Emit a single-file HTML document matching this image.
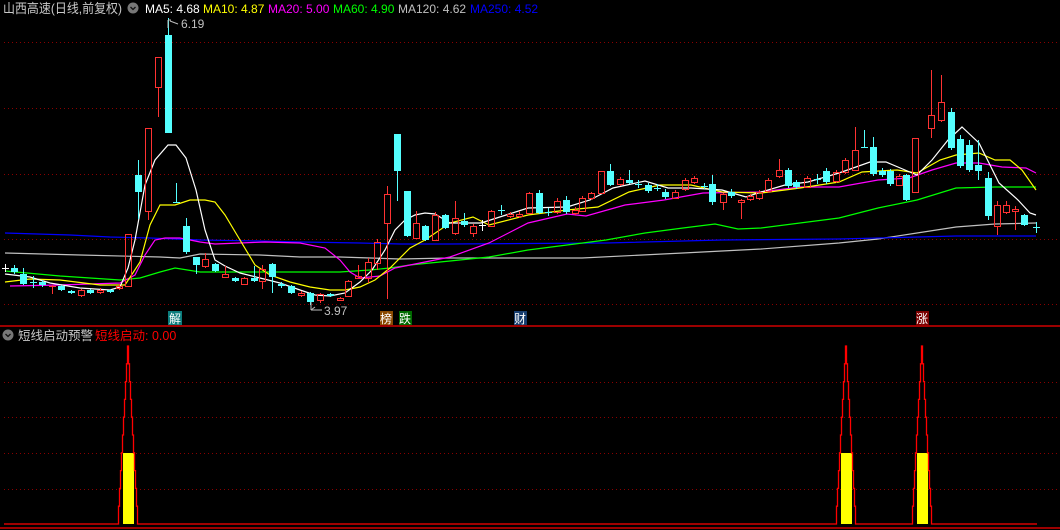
<!DOCTYPE html>
<html><head><meta charset="utf-8"><style>
html,body{margin:0;padding:0;background:#000;width:1060px;height:530px;overflow:hidden}
svg{display:block}
text{font-family:"Liberation Sans","Noto Sans CJK SC",sans-serif}
</style></head><body>
<svg id="s" width="1060" height="530" xmlns="http://www.w3.org/2000/svg">
<rect width="1060" height="530" fill="#000"/>
<g stroke="#8a0000" stroke-width="1" stroke-dasharray="1,3">
<line x1="4" y1="42.5" x2="1060" y2="42.5"/>
<line x1="4" y1="108.5" x2="1060" y2="108.5"/>
<line x1="4" y1="174.5" x2="1060" y2="174.5"/>
<line x1="4" y1="239.5" x2="1060" y2="239.5"/>
<line x1="4" y1="304.5" x2="1060" y2="304.5"/>
<line x1="4" y1="382.5" x2="1060" y2="382.5"/>
<line x1="4" y1="417.5" x2="1060" y2="417.5"/>
<line x1="4" y1="453.5" x2="1060" y2="453.5"/>
<line x1="4" y1="489.5" x2="1060" y2="489.5"/>
</g>
<line x1="0" y1="326" x2="1060" y2="326" stroke="#d00000" stroke-width="1.5"/>
<line x1="0" y1="528" x2="1060" y2="528" stroke="#d00000" stroke-width="1.5"/>
<g id="ma" fill="none" stroke-width="1.2"></g>
<g id="cd"></g>
<g id="ind"></g>
<!-- header -->
<text x="3" y="13" font-size="13" fill="#c8c8c8" textLength="119" lengthAdjust="spacingAndGlyphs">山西高速(日线,前复权)</text>
<circle cx="133" cy="8" r="5.5" fill="#777"/>
<path d="M130.5 7 L133 9.5 L135.5 7" stroke="#111" stroke-width="1.3" fill="none"/>
<text x="145" y="13" font-size="12" fill="#fff">MA5: 4.68</text>
<text x="203" y="13" font-size="12" fill="#ffff00">MA10: 4.87</text>
<text x="268" y="13" font-size="12" fill="#ff00ff">MA20: 5.00</text>
<text x="333" y="13" font-size="12" fill="#00ff00">MA60: 4.90</text>
<text x="398" y="13" font-size="12" fill="#c0c0c0">MA120: 4.62</text>
<text x="470" y="13" font-size="12" fill="#0000ff">MA250: 4.52</text>
<!-- markers -->
<path d="M168 20 L168 28 M168 20 L171 20 M170 21 L178 24" stroke="#bbb" fill="none"/>
<text x="181" y="28" font-size="12" fill="#c0c0c0">6.19</text>
<path d="M311 302 L311 310 M311 310 L322 310 M311 310 L315 307" stroke="#bbb" fill="none"/>
<text x="324" y="315" font-size="12" fill="#c0c0c0">3.97</text>
<!-- labels -->
<rect x="168" y="311" width="14" height="14" fill="#0b7d7d"/><text x="169" y="323" font-size="12" fill="#fff">解</text>
<rect x="380" y="311" width="13" height="14" fill="#8a4a00"/><text x="380" y="323" font-size="12" fill="#fff">榜</text>
<rect x="399" y="311" width="13" height="14" fill="#006a00"/><text x="399" y="323" font-size="12" fill="#fff">跌</text>
<rect x="514" y="311" width="13" height="14" fill="#173d6e"/><text x="514" y="323" font-size="12" fill="#fff">财</text>
<rect x="916" y="311" width="13" height="14" fill="#7a0000"/><text x="916" y="323" font-size="12" fill="#fff">涨</text>
<!-- lower title -->
<circle cx="8" cy="335" r="5.5" fill="#777"/>
<path d="M5.5 334 L8 336.5 L10.5 334" stroke="#111" stroke-width="1.3" fill="none"/>
<text x="18" y="340" font-size="12.5" fill="#c8c8c8">短线启动预警</text>
<text x="95" y="340" font-size="12.5" fill="#ff0000">短线启动: 0.00</text>
</svg>
<script>
var NS="http://www.w3.org/2000/svg";
function el(p,t,a){var e=document.createElementNS(NS,t);for(var k in a)e.setAttribute(k,a[k]);p.appendChild(e);return e;}
var ma=document.getElementById('ma');
var lines={
"#c0c0c0":[[5,253],[80,255],[160,257],[180,258],[200,254],[260,255],[300,257],[340,257],[400,259],[450,258],[582,258],[683,253],[761,249],[839,243],[878,239],[917,233],[956,227],[995,224],[1036,223]],
"#0000ff":[[5,233],[70,235],[110,237],[150,238],[200,240],[260,241],[300,242],[360,243],[400,244],[450,244],[606,243],[722,240],[839,239],[917,237],[956,236],[1036,236]],
"#00ff00":[[5,271],[60,276],[120,280],[140,278],[160,272],[175,268],[200,272],[300,272],[340,272],[370,270],[390,268],[410,265],[440,262],[450,261],[489,257],[528,250],[567,245],[606,240],[645,233],[683,228],[715,224],[738,229],[761,228],[800,223],[839,218],[878,208],[917,200],[956,188],[995,187],[1018,187],[1036,187]],
"#ff00ff":[[10,286],[60,285],[120,283],[135,275],[145,255],[155,240],[165,238],[180,238],[200,242],[215,244],[240,243],[265,242],[300,243],[325,248],[340,260],[350,272],[360,278],[380,276],[395,268],[420,263],[450,257],[489,243],[528,223],[567,214],[586,216],[625,205],[664,200],[703,193],[761,192],[800,187],[839,187],[878,180],[909,178],[932,170],[956,163],[979,163],[1002,167],[1026,168],[1036,173]],
"#ffff00":[[5,282],[30,279],[60,280],[100,285],[125,285],[140,262],[150,225],[160,205],[175,205],[190,200],[205,200],[215,202],[225,215],[240,240],[255,265],[270,275],[290,282],[310,287],[330,290],[345,290],[360,287],[375,280],[390,268],[400,258],[410,248],[425,240],[450,223],[473,217],[489,225],[528,215],[567,210],[598,207],[629,192],[660,185],[691,185],[722,192],[761,193],[785,190],[800,188],[839,182],[862,172],[897,170],[917,173],[940,160],[956,155],[979,153],[995,160],[1010,160],[1022,170],[1036,190]],
"#ffffff":[[5,274],[30,277],[50,283],[80,288],[110,290],[120,287],[128,268],[135,240],[145,185],[155,160],[168,145],[176,145],[186,158],[196,190],[205,230],[215,260],[225,266],[240,273],[260,278],[280,283],[300,290],[315,295],[330,296],[345,293],[360,282],[372,270],[385,250],[395,230],[405,220],[415,215],[425,213],[435,214],[450,223],[481,223],[528,208],[567,207],[590,200],[613,188],[645,181],[668,188],[691,188],[722,190],[746,197],[761,192],[785,185],[808,182],[839,173],[870,162],[886,162],[905,170],[917,175],[932,160],[948,140],[962,127],[979,143],[999,183],[1018,200],[1030,213],[1036,215]]
};
for(var c in lines){el(ma,'polyline',{points:lines[c].map(function(p){return p.join(',')}).join(' '),stroke:c});}
var A=[
[5,268,268,264,272,'w'],[14,268,272,265,274,'c'],[23,274,284,268,285,'c'],[33,282,282,276,288,'c'],[42,282,285,280,287,'c'],
[52,286,287,285,294,'r'],[61,286,290,285,291,'c'],[71,291,293,290,294,'c'],[81,290,295,289,297,'r'],[90,290,293,289,294,'c'],
[100,290,292,288,294,'r'],[110,290,292,289,293,'c'],[119,286,288,284,290,'r'],[128,234,286,234,287,'r'],[138,175,192,160,219,'c'],
[148,128,211,128,220,'r'],[158,57,87,57,117,'r'],[168,35,133,18,133,'c'],[176,202,203,183,203,'c'],[186,226,252,218,254,'c'],
[196,257,265,257,274,'c'],[205,259,266,253,268,'r'],[215,264,271,263,272,'c'],[225,274,277,266,278,'r'],[235,278,281,277,282,'c'],
[244,278,284,277,285,'r'],[254,278,281,266,282,'c'],[262,269,281,265,289,'r'],[272,264,277,263,293,'c'],[281,284,286,282,288,'c'],
[291,286,293,285,294,'c'],[301,293,295,291,297,'r'],[310,293,302,292,305,'c'],[320,294,300,293,303,'r'],[330,294,296,293,297,'c'],
[340,298,300,297,301,'r'],[348,281,296,280,297,'r'],[358,276,278,265,279,'r'],[368,262,278,258,283,'r'],[377,242,263,239,270,'r'],
[387,194,223,186,299,'r'],[397,134,171,134,201,'c'],[407,191,236,191,237,'c'],[416,223,238,211,239,'r'],[425,226,240,225,241,'c'],
[435,215,240,212,241,'r'],[445,215,228,214,229,'c'],
[455,218,233,201,235,'r'],[464,221,225,213,227,'c'],[473,226,233,224,237,'r'],[482,225,225,220,231,'w'],[491,211,226,210,227,'r'],
[501,210,210,205,215,'c'],[510,214,216,212,218,'r'],[519,214,216,211,218,'r'],[529,193,213,192,214,'r'],[539,193,213,190,214,'c'],
[548,212,212,208,216,'c'],[557,201,212,198,214,'r'],[566,200,212,196,214,'c'],[575,210,213,207,215,'r'],[582,198,211,196,212,'r'],
[591,193,198,192,200,'r'],[601,171,193,171,194,'r'],[610,171,185,164,186,'c'],[620,179,184,177,186,'r'],[629,180,183,170,184,'c'],
[638,184,184,180,188,'c'],[648,185,191,183,193,'c'],[657,188,188,184,191,'c'],[665,192,197,189,199,'c'],[675,192,198,190,199,'r'],
[685,180,189,178,191,'r'],[694,178,182,176,184,'r'],[704,186,186,183,189,'c'],[712,184,202,175,205,'c'],[723,194,202,193,210,'r'],
[731,192,196,189,198,'c'],[741,200,202,199,219,'r'],[750,196,199,194,201,'r'],[759,192,198,190,200,'r'],[768,180,191,178,193,'r'],
[779,170,176,159,178,'r'],[788,170,186,168,188,'c'],[796,182,187,180,189,'c'],[807,178,187,176,188,'r'],[817,179,179,174,184,'c'],
[826,171,182,168,184,'c'],[836,172,181,170,183,'r'],[845,160,172,158,174,'r'],[855,150,170,127,171,'r'],[864,147,148,130,148,'c'],
[873,147,174,137,176,'c'],[882,171,175,168,177,'c'],[890,171,184,169,186,'c'],[899,176,185,174,186,'r'],[906,175,200,174,201,'c'],
[915,138,192,138,193,'r'],[931,115,128,70,138,'r'],[941,102,120,75,122,'r'],[951,112,148,108,150,'c'],[960,139,166,135,168,'c'],
[969,145,170,140,172,'c'],[978,165,171,140,180,'c'],[988,178,216,172,220,'c'],[997,205,226,201,235,'r'],[1006,205,212,201,214,'r'],
[1015,209,211,206,230,'r'],[1024,215,225,214,226,'c'],[1036,227,227,222,233,'c']
];
var cd=document.getElementById('cd');
A.forEach(function(a){var x=a[0],t=a[1],b=a[2],h=a[3],l=a[4],ty=a[5];
var col=ty=='r'?'#ff3232':(ty=='c'?'#54ffff':'#ffffff');
el(cd,'line',{x1:x+.5,y1:h,x2:x+.5,y2:t,stroke:col});
el(cd,'line',{x1:x+.5,y1:b,x2:x+.5,y2:l,stroke:col});
if(b-t<2){el(cd,'line',{x1:x-3,y1:t+.5,x2:x+4,y2:t+.5,stroke:col});}
else if(ty=='r'){el(cd,'rect',{x:x-2.5,y:t+.5,width:6,height:b-t,fill:'none',stroke:col});}
else{el(cd,'rect',{x:x-3,y:t,width:7,height:b-t,fill:col});}
});
var ind=document.getElementById('ind');
var pts=[[4,524]];
[128,846,922].forEach(function(c){
el(ind,'rect',{x:c-5,y:453,width:11,height:71,fill:'#ffff00'});
var n=10,hw=[9.5,8.5,7.5,6.5,5.5,4.5,3.5,2.5,1.5,0.5];var up=[];
for(var i=0;i<n;i++){var y0=524-i*17.8,y1=524-(i+1)*17.8;up.push([c-hw[i],y0]);up.push([c-hw[i],y1]);}
pts.push([c-hw[0],524]);pts=pts.concat(up);pts.push([c+0.5,346]);
for(var i=n-1;i>=0;i--){var y0=524-i*17.8,y1=524-(i+1)*17.8;pts.push([c+hw[i],y1]);pts.push([c+hw[i],y0]);}
});
pts.push([1037,524]);
el(ind,'polyline',{points:pts.map(function(p){return p.join(',')}).join(' '),fill:'none',stroke:'#ff0000','stroke-width':1.3});
</script>
</body></html>
